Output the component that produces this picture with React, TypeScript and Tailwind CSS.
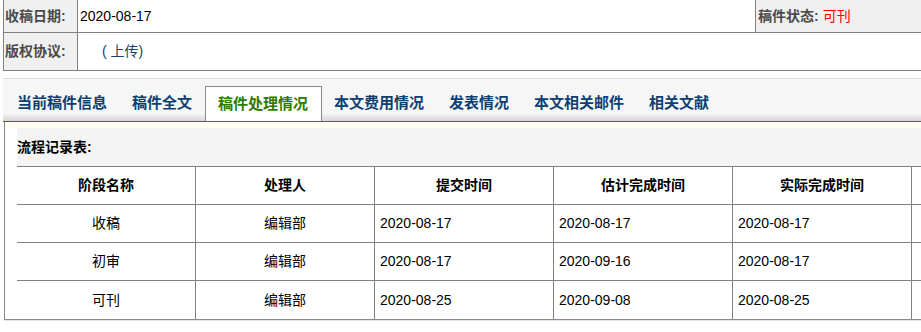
const font = "font-['Liberation_Sans','Noto_Sans_CJK_SC',sans-serif]";

const tabs = ["当前稿件信息", "稿件全文", "稿件处理情况", "本文费用情况", "发表情况", "本文相关邮件", "相关文献"];

const heads = ["阶段名称", "处理人", "提交时间", "估计完成时间", "实际完成时间", ""];

const rows = [
  ["收稿", "编辑部", "2020-08-17", "2020-08-17", "2020-08-17", ""],
  ["初审", "编辑部", "2020-08-17", "2020-09-16", "2020-08-17", ""],
  ["可刊", "编辑部", "2020-08-25", "2020-09-08", "2020-08-25", ""],
];

export default function App() {
  return (
    <div className={`${font} w-[921px] h-[332px] overflow-hidden bg-white text-[14px] text-black`}>
      {/* info table */}
      <div className="ml-[3px] border-l border-[#808080]">
        <div className="flex h-[33px] border-b border-[#808080]">
          <div className="flex w-[74px] items-center border-r border-[#808080] bg-[#f0f0f0] pl-[1px] font-bold text-[#4a4a4a]">
            收稿日期:
          </div>
          <div className="flex w-[677px] items-center pl-[2px]">2020-08-17</div>
          <div className="flex flex-1 items-center border-l border-[#808080] bg-[#efefef] pl-[2px] font-bold text-[#4a4a4a]">
            稿件状态: <span className="ml-[4px] font-normal text-[#ff0000]">可刊</span>
          </div>
        </div>
        <div className="flex h-[38px] border-b border-[#808080]">
          <div className="flex w-[74px] items-center border-r border-[#808080] bg-[#f0f0f0] pl-[1px] font-bold text-[#4a4a4a]">
            版权协议:
          </div>
          <div className="flex flex-1 items-center pl-[24px] text-[#1c3f6e]">( 上传)</div>
        </div>
      </div>

      {/* tab bar */}
      <div className="ml-[3px] mt-[7px] flex h-[44px] items-end border-t border-b border-t-[#dcdcdc] border-b-[#666600] bg-[linear-gradient(to_bottom,#f6f6f6_82%,#d6d6d6)] pl-[1.5px]">
        {tabs.map((t) => {
          const active = t === "稿件处理情况";
          return (
            <div
              key={t}
              className={
                active
                  ? "flex h-[35px] items-center border border-b-0 border-[#888888] bg-white px-[12.5px] text-[15px] font-bold text-[#2f7a00]"
                  : "flex h-[35px] items-center px-[12.5px] text-[15px] font-bold text-[#0e3f72]"
              }
            >
              {t}
            </div>
          );
        })}
      </div>

      {/* process content */}
      <div className="ml-[4px] border-l border-b border-[#888888] pl-[12px] pt-[6px] shadow-[0_1px_0_#e4e4e4]">
        <div className="flex h-[38px] items-center bg-[#f4f4f4] font-bold">流程记录表:</div>
        <div className="grid w-[1074px] grid-cols-[179px_179px_179px_179px_179px_179px] border-t border-[#808080]">
          {heads.map((h, i) => (
            <div
              key={"h" + i}
              className="flex h-[38px] items-center justify-center border-r border-b border-[#808080] font-bold"
            >
              {h}
            </div>
          ))}
          {rows.map((r, ri) =>
            r.map((c, ci) => (
              <div
                key={ri + "-" + ci}
                className={
                  (ri === rows.length - 1 ? "border-b-0 " : "border-b ") +
                  (ci < 2
                    ? "flex h-[38px] items-center justify-center border-r border-[#808080]"
                    : "flex h-[38px] items-center border-r border-[#808080] pl-[5px]")
                }
              >
                {c}
              </div>
            ))
          )}
        </div>
      </div>
    </div>
  );
}
